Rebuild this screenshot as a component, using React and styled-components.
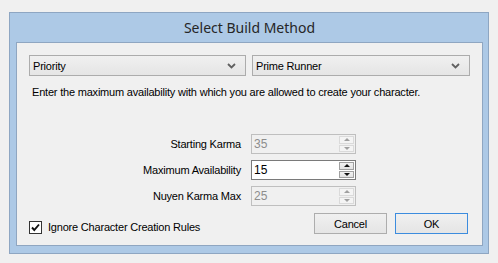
import React, { useState } from 'react';
import styled, { createGlobalStyle } from 'styled-components';

const GlobalStyle = createGlobalStyle`
  html, body {
    margin: 0;
    padding: 0;
    background: #f0f0f0;
  }
  body {
    font-family: 'Liberation Sans', Arial, sans-serif;
    font-size: 11px;
    letter-spacing: -0.2px;
    color: #000;
  }
`;

const rows = [
  { label: 'Starting Karma', value: '35', disabled: true },
  { label: 'Maximum Availability', value: '15', disabled: false },
  { label: 'Nuyen Karma Max', value: '25', disabled: true },
];

export default function App() {
  const [ignoreRules, setIgnoreRules] = useState(true);

  return (
    <>
      <GlobalStyle />
      <Window>
        <TitleBar>Select Build Method</TitleBar>
        <Client>
          <ComboRow>
            <Combo>
              <span>Priority</span>
              <Chevron />
            </Combo>
            <Combo>
              <span>Prime Runner</span>
              <Chevron />
            </Combo>
          </ComboRow>
          <Description>
            Enter the maximum availability with which you are allowed to create your character.
          </Description>
          <SpinGrid>
            {rows.map(row => (
              <React.Fragment key={row.label}>
                <SpinLabel>{row.label}</SpinLabel>
                <SpinBox disabled={row.disabled}>
                  <SpinValue disabled={row.disabled}>{row.value}</SpinValue>
                  <SpinButtons>
                    <SpinButton disabled={row.disabled}>
                      <UpArrow disabled={row.disabled} />
                    </SpinButton>
                    <SpinButton disabled={row.disabled}>
                      <DownArrow disabled={row.disabled} />
                    </SpinButton>
                  </SpinButtons>
                </SpinBox>
              </React.Fragment>
            ))}
          </SpinGrid>
          <BottomRow>
            <CheckLabel onClick={() => setIgnoreRules(!ignoreRules)}>
              <CheckBox>
                {ignoreRules && (
                  <svg width="11" height="11" viewBox="0 0 11 11">
                    <path d="M2 5.5 L4.3 8 L9 2.5" fill="none" stroke="#111" strokeWidth="1.9" />
                  </svg>
                )}
              </CheckBox>
              <span>Ignore Character Creation Rules</span>
            </CheckLabel>
            <Buttons>
              <Button>Cancel</Button>
              <Button primary>OK</Button>
            </Buttons>
          </BottomRow>
        </Client>
      </Window>
    </>
  );
}

function Chevron() {
  return (
    <ChevronIcon width="9" height="6" viewBox="0 0 9 6">
      <path d="M1 1 L4.5 4.5 L8 1" fill="none" stroke="#606060" strokeWidth="1.8" />
    </ChevronIcon>
  );
}

const Window = styled.div`
  box-sizing: border-box;
  margin: 12px 0 0 9px;
  width: 480px;
  height: 242px;
  border: 1px solid #8ea6c2;
  background: #adc9e6;
  padding: 0 5px 7px 6px;
  display: flex;
  flex-direction: column;
`;

const TitleBar = styled.div`
  height: 29px;
  display: flex;
  align-items: center;
  justify-content: center;
  font-family: 'Noto Sans', 'Open Sans', sans-serif;
  font-size: 14px;
  letter-spacing: 0;
  color: #262626;
  padding-bottom: 1px;
  box-sizing: border-box;
`;

const Client = styled.div`
  flex: 1;
  border: 1px solid #8fa6c1;
  background: #f0f0f0;
  padding: 12px 12px 0 12px;
  display: flex;
  flex-direction: column;
`;

const ComboRow = styled.div`
  display: grid;
  grid-template-columns: 217px 218px;
  column-gap: 6px;
`;

const Combo = styled.div`
  box-sizing: border-box;
  height: 21px;
  border: 1px solid #acacac;
  background: linear-gradient(#f0f0f0, #e5e5e5);
  display: flex;
  align-items: center;
  justify-content: space-between;
  padding: 0 9px 0 3px;
`;

const ChevronIcon = styled.svg`
  display: block;
`;

const Description = styled.div`
  margin-top: 10px;
  padding-left: 3px;
  line-height: 13px;
  white-space: nowrap;
`;

const SpinGrid = styled.div`
  margin-top: 35px;
  display: grid;
  grid-template-columns: 212px 105px;
  column-gap: 10px;
  row-gap: 6px;
  align-items: center;
`;

const SpinLabel = styled.div`
  text-align: right;
  line-height: 13px;
`;

const SpinBox = styled.div`
  box-sizing: border-box;
  height: 20px;
  border: 1px solid ${p => (p.disabled ? '#bfbfbf' : '#7a7a7a')};
  background: ${p => (p.disabled ? '#f0f0f0' : '#fff')};
  display: flex;
  align-items: stretch;
`;

const SpinValue = styled.div`
  flex: 1;
  display: flex;
  align-items: center;
  padding-left: 2px;
  font-size: 12px;
  letter-spacing: 0;
  color: ${p => (p.disabled ? '#8d8d8d' : '#000')};
`;

const SpinButtons = styled.div`
  width: 15px;
  display: flex;
  flex-direction: column;
  padding: 1px 1px 1px 0;
  gap: 1px;
`;

const SpinButton = styled.div`
  flex: 1;
  box-sizing: border-box;
  border: 1px solid ${p => (p.disabled ? '#dadada' : '#a0a0a0')};
  background: ${p => (p.disabled ? '#f4f4f4' : 'linear-gradient(#f2f2f2, #e2e2e2)')};
  display: flex;
  align-items: center;
  justify-content: center;
`;

const UpArrow = styled.div`
  width: 0;
  height: 0;
  border-left: 3px solid transparent;
  border-right: 3px solid transparent;
  border-bottom: 3px solid ${p => (p.disabled ? '#a0a0a0' : '#111')};
`;

const DownArrow = styled.div`
  width: 0;
  height: 0;
  border-left: 3px solid transparent;
  border-right: 3px solid transparent;
  border-top: 3px solid ${p => (p.disabled ? '#a0a0a0' : '#111')};
`;

const BottomRow = styled.div`
  margin-top: 7px;
  display: flex;
  align-items: flex-start;
  justify-content: space-between;
  padding-right: 2px;
`;

const CheckLabel = styled.label`
  display: flex;
  align-items: center;
  gap: 6px;
  margin-top: 8px;
  cursor: default;
  line-height: 13px;
`;

const CheckBox = styled.span`
  box-sizing: border-box;
  width: 13px;
  height: 13px;
  border: 1px solid #333;
  background: #fff;
  display: flex;
  align-items: center;
  justify-content: center;
`;

const Buttons = styled.div`
  display: flex;
  gap: 8px;
`;

const Button = styled.button`
  box-sizing: border-box;
  width: 73px;
  height: 21px;
  font-family: 'Liberation Sans', Arial, sans-serif;
  font-size: 11px;
  letter-spacing: -0.2px;
  color: #000;
  border: 1px solid ${p => (p.primary ? '#3c8cde' : '#adadad')};
  background: linear-gradient(#f0f0f0, #e5e5e5);
  padding: 0;
`;
